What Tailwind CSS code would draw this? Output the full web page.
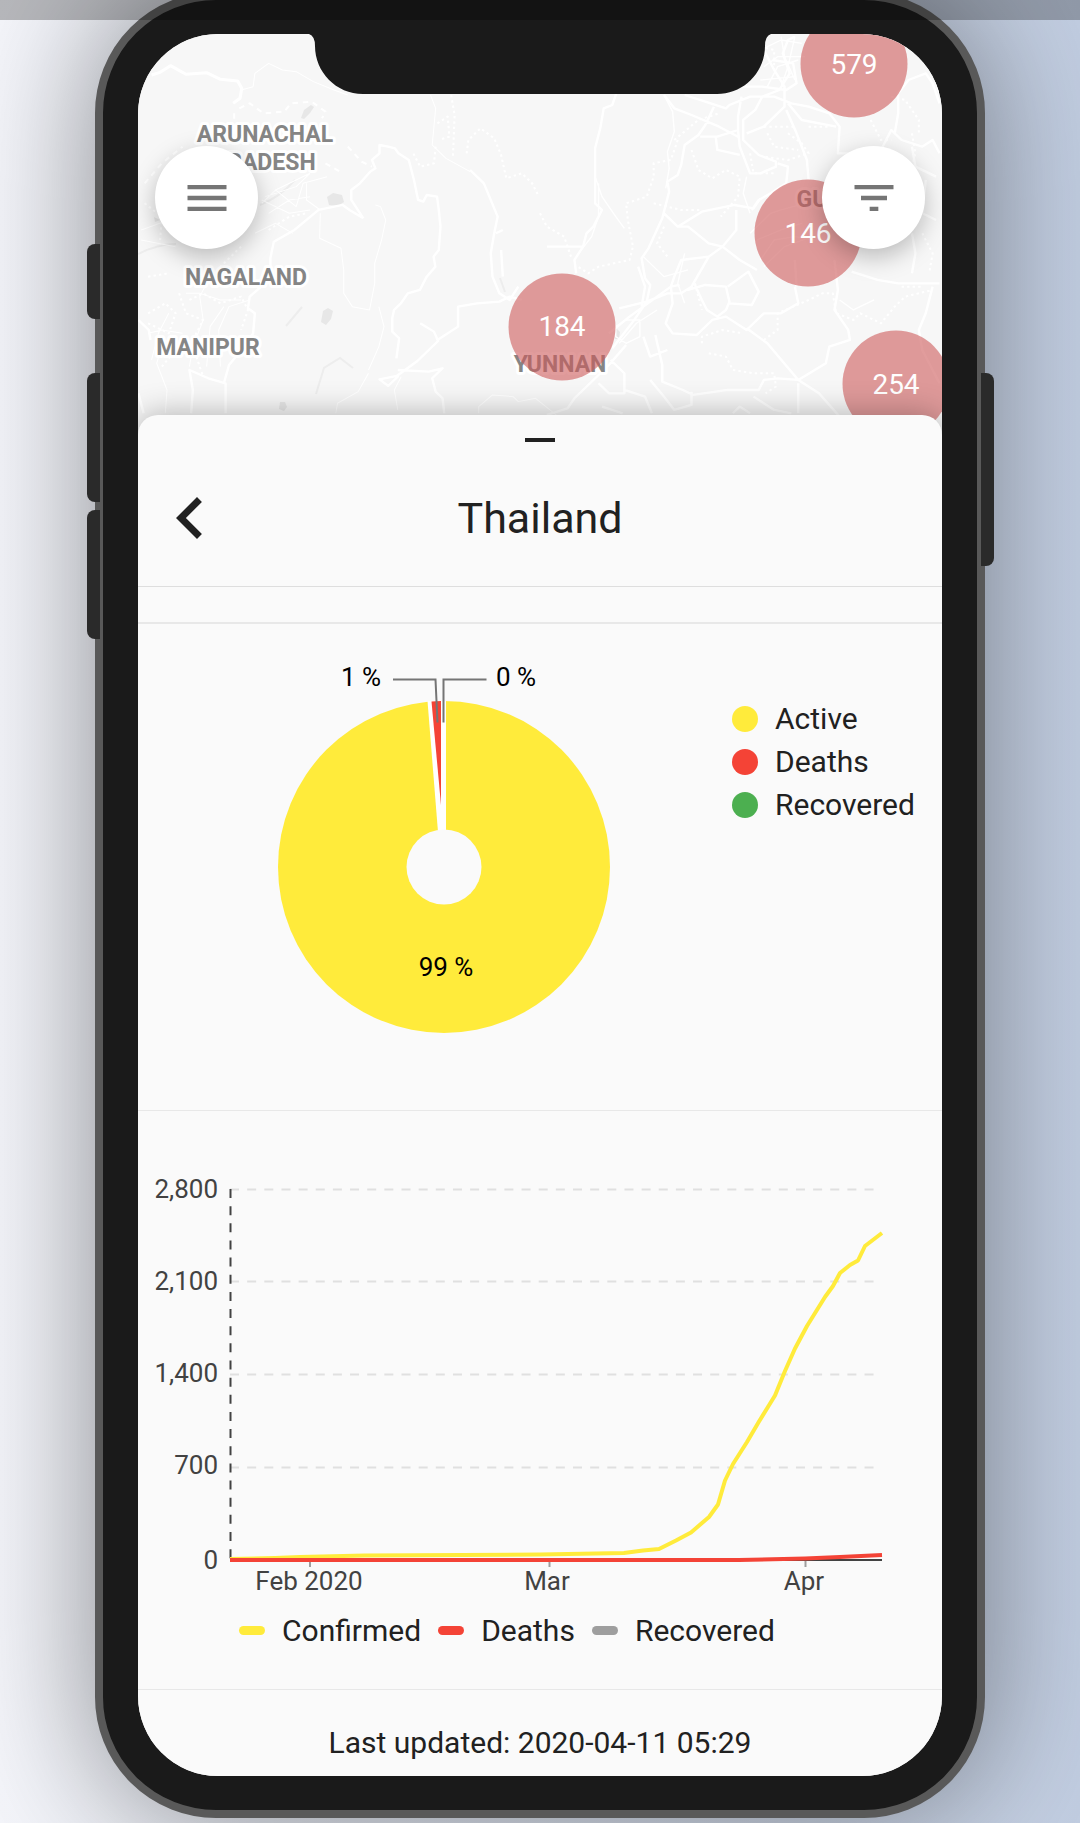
<!DOCTYPE html>
<html lang="en">
<head>
<meta charset="utf-8">
<meta name="viewport" content="width=device-width, initial-scale=1">
<title>Thailand</title>
<script src="https://cdn.jsdelivr.net/npm/@tailwindcss/browser@4"></script>
</head>
<body class="relative min-h-screen overflow-x-hidden bg-gradient-to-r from-[#f4f5fa] to-[#c1cde1] font-['Roboto',sans-serif] text-[#212121]">
<div class="overflow-hidden px-[95px] pb-[5px]">
<main class="relative -mt-2 rounded-[121px] border-8 border-[#595959] bg-[#1a1a1a] px-[35px] py-[34px] shadow-[0_0_130px_rgba(0,0,0,0.42)]">

  <!-- Hardware buttons -->
  <div class="absolute -left-4 top-[244px] h-[75px] w-[13px] rounded-l-lg bg-[#2a2a2a]"></div>
  <div class="absolute -left-4 top-[373px] h-[129px] w-[13px] rounded-l-lg bg-[#2a2a2a]"></div>
  <div class="absolute -left-4 top-[510px] h-[129px] w-[13px] rounded-l-lg bg-[#2a2a2a]"></div>
  <div class="absolute -right-[17px] top-[373px] h-[193px] w-[13px] rounded-r-lg bg-[#2a2a2a]"></div>

  <div class="relative overflow-hidden rounded-[80px] bg-[#f7f7f7]">

    <!-- Map -->
    <section class="relative h-[381px]" aria-label="Map">
      <svg class="absolute inset-x-0 top-0 h-[401px] w-full" viewBox="138 34 804 401" preserveAspectRatio="xMidYMin slice">
        <rect x="0" y="0" width="1080" height="440" fill="#f7f7f7"/>
        <g fill="#e7e7e7">
          <path d="M301 118l3-8 7-5 3 2-4 6-6 6zM327 197l6-4 9 2 2 7-6 4-9-1zM323 311l5-3 5 3-2 8-5 6-5-3zM280 402l5 0 2 5-3 4-5-2zM616 328l4 4-1 7-4 0zM154 217l6 3-5 2z"/>
        </g>
        <g fill="none" stroke="#ededed" stroke-width="2">
          <path d="M286 326l16-19M138 254q20-10 38-10M260 205q20-8 35-25M316 394l8-26 16-10 13 10M500 278l5 14"/>
        </g>
        <g transform="scale(.3444 .3333)" fill="none" stroke="#fff" stroke-linejoin="round">
          <path stroke-width="9" d="M440 225l25-8 30-20 45 26 60-5 40 20 50 5 12 22-5 30-20 15"/>
          <path stroke-width="7" d="M1055 655l-35-55 0-30 25-20 30-35 15-10-10-25 22-20 0-25 25 5 20 5 10 15 30 20 15 60 12 60 15 5 10-20 30 5 5 40 5 50-5 70-15 20 5 30-25 30-20 40-35 10-20 30-20 20-5 25 0 40 20 20-8 60M1055 655l-40-25-20-15-70 15-70 60-60 35-10 50 0 60-60 55-5 35 20 15-5 60-30 45-40 50-15 55M1220 970l40 25 12 28-60 60-60 45-50 10 25 20 30-30M1270 1020l60-40 0-60 55-10 65-5 30-15 35 10M1155 1110l90 5 40-10-30 30 10 40 20 20 5 45M1365 510l40 40 40 100-10 50-10 60 5 70 20 50 30 20 25-40M1455 750l5 80M1440 700l20-10M655 1240l0-90-50-15-55-25 10 60-5 70M402 960l30 30 5 30M402 1180l15 60"/>
          <path stroke-width="3" d="M735 260l5-40 40-30 40 20 40 5 50 30 60 25 40 15M700 270l35-10M930 640l-2 75 62 30 8 65 0 70 25 40 50 10 15-80 0-60 20-70 12-60-15-40-15-5M1250 285l15 40-10 110 40 40 70 40M1165 1130l-20 40 10 60M975 1240l5-30 60-35 30-55M1100 920l15 60-15 60-30 70M1390 1240l0-20 40-35 60 5 15 15 50-10 60 50M410 690l80-30M410 720l100 20M430 1000l40-10 60 10M440 1080l20-80 30-60M480 1240l5-70-30-80 20-70M550 1100l10-60 30-80-10-70 30-60M600 1100l10-120 40-60M640 1100l-5-110 30-70 60-20M700 900l-60 0-60-20-40 0M760 600l80 40 60-10M760 610l40-40 100-50M770 590l90-30 40-40M800 570l60 50 20-70 70-20M890 550l0 50 40 30M780 640l60-40 60-10M740 700l60-30 50 30"/>
          <path stroke-width="6" stroke-dasharray="16 14" d="M695 325l30-15 40 30 60-5 20-25 60-5 40 30-10 20M680 340l0 30M1010 440l40 45 30 15M945 490l50 30M420 550l50-60 60-50"/>
          <path stroke-width="6" stroke-dasharray="7 9" d="M1310 285l10 60-5 130M1270 370l30-20 5 60-30 10M1265 440l-5 50-40 10-20-40M1355 460l5-40 35-35 40 30 20 50 15 70 45-15 30 30 20 40M430 940l50-30 30 30-20 60-60-30M550 900l40-20 50 30 60-20 20 40-20 60M520 880l20 60 50 20-30 60-40 20M470 1100l40-50 60 20 20 60M420 610l50 40-5 70M780 690l60-40 50-10M430 830l60-10M700 740l-60 60"/>
        </g>
        <g transform="translate(540 0) scale(.3444 .3333)" fill="none" stroke="#fff" stroke-linejoin="round">
          <path stroke-width="7" d="M225 270l-15 45-25 10-10 60-15 60 0 140 0 25 20 20-25 50-20 20-10 40-25 0-80 0M125 740l-25 40 5 40M360 285l30 40 50 20 80 35 55 30M420 285l60 20 60 20 10-10 60-25 70 0 50 20 50 10 60 20 30 40-5 80 40 0M505 320l-25 55-20 30-40 30-10 60-10 30-30 20 5 30-20 80-40 90-20 30 10 60 15 20-10 50-40 60-60 80M465 410l50 0 60-20 0-40 10-60M510 410l5 40 65 15M575 390l5 50 30 80 30 0 45-20 0-15-50-20-45-45 0-60 35-30 20-40 50-20 30-50-20-60 15-40 20-10M585 260l60 0 70 10 30-20-10-60-60-10M640 130l40 80 30 50 0 60-60 60-50 20M690 490l30 10-5 50-45 30-35 20-20 30M780 540l-5-60-30-80-30-70M720 310l40 50 100 20M360 640l40 40 30 0 60 50 40 10 50 40 50 30M400 680l70-45 95-20 55 10 20-30M570 630l0 60-40 50-40 30-80 10-20 50-10 30-40 30-80 60-60 50M490 770l-50 90-30 20-40 0-60 25-80 20M285 800l20 60-10 60M430 870l50-15 60 5 10 45-10 25-25 20-30-20-15-30-20-45M550 910l65 5 20-40-30-60-60 45M740 860l10 50-50 30-50 0-50 50-60-40-40 10-45 45-70-5-20-30 20-60-5-50 25-5M740 780l5 80M600 985l60 45 90 110 60 40 60 70M855 780l10 90-10 60 40 60 5 30-60 20-10 50-80 50-60-5-40 5-15 30-90 0-100 15-30-15-60-25 0-50-20-90M300 1010l20 60 50-20M20 1245l60-20 20-30 40-40 60-60 50-60M170 1150l30 30 45 0 0-60-40-40M245 1170l60 20 20 50M320 1140l40 50 30 40 50-15 0-40M620 1190l60 40 50 10M750 1150l0 90M1160 850l-120 0-60-10-75-25M1140 860l-20 80-20 50 10 60 50 100M1030 400l10-60 0-60 30-40 50-20 20 30 20 60M1160 460l-20-40-30 20-60-20-30-30-30 60-80 10M1160 280l-20-70-40-60M1150 530l-60-30-10-60M1120 540l-10 100 40 20M1080 700l10 60-10 60M180 1220l60 20M560 1240l20-20 30 20"/>
          <path stroke-width="4" d="M360 285l25 50 5 60-20 60 5 50-10 60M160 530l20 60 40 60 25 35M170 550l0 100-20 60-30 40M610 700l60-60 30-10 70-20M630 720l70-30 60-20M640 780l40-60 60-10 60 10M650 800l60-60 80-30M640 150l60-30 60 10M650 200l40-30 80 0M660 260l30-60 60-20M640 240l100-10M700 110l10 60 30 70M740 110l-20 90-20 60M610 640l-20-60 10-50M870 900l40 30 60-30M250 960l40 0 0 50-40 20-30-20 0-30zM230 1030l50-60 60-40M420 760l-20 90 20 60M300 770l60 60 70-20"/>
          <path stroke-width="6" stroke-dasharray="7 9" d="M400 420l-20 60-50 10 0 40-20 60-60 20 5 50 15 80-10 40-90 20-30 20-30-20M0 640l20 40 50 30 20 60M440 450l20 60 40 25 40-25 40 20-5 60-50 60M330 610l80 20 60 0M360 680l-20 50 30 40M450 850l20 80M470 1030l0-20 60-20 60 10M490 1060l50 10 20 40 60 10 60 0 5 40-30 20M650 1020l40-30 0-50 90-40 40-20 30 0 10 60 50 20 20-20 60 30 40-50 30-30 80-20M720 400l40 30 20 30-60 20-70-10M660 400l20 40 70 10M780 380l60 0M1020 290l40 10 40 60 0 40M1080 400l10 60-10 40M960 360l30 60 30 0M610 460l10 60 60 0M390 420l70-60 60-20M650 380l90 0M1110 700l30 60-10 60M640 140l40 10 0 60M1050 860l60 0"/>
        </g>
        <g class="text-[23px] font-bold" fill="#858585" stroke="#fff" stroke-width="6" stroke-linejoin="round" paint-order="stroke" text-anchor="middle">
          <text x="265" y="142">ARUNACHAL</text>
          <text x="264" y="170">PRADESH</text>
          <text x="246" y="285">NAGALAND</text>
          <text x="208" y="355">MANIPUR</text>
          <text x="560" y="372">YUNNAN</text>
          <text x="846" y="207">GUIZHOU</text>
        </g>
        <g fill="#cd5a5a" fill-opacity="0.6">
          <circle cx="854" cy="64" r="53.500"/>
          <circle cx="808" cy="233" r="53.500"/>
          <circle cx="562" cy="327" r="53.500"/>
          <circle cx="896" cy="384" r="53.500"/>
        </g>
        <g class="text-[28px]" fill="#fff" text-anchor="middle">
          <text x="854" y="74">579</text>
          <text x="808" y="243">146</text>
          <text x="562" y="336">184</text>
          <text x="896" y="394">254</text>
        </g>
      </svg>

      <svg class="absolute left-1/2 top-0 h-[60px] w-[462px] -translate-x-1/2" viewBox="0 0 462 60" aria-hidden="true">
        <path fill="#1a1a1a" d="M0 0h462q-6 2-6 12C456 38 435 60 408 60H54C27 60 6 38 6 12Q6 2 0 0z"/>
      </svg>

      <button type="button" aria-label="Menu" class="absolute left-[17px] top-[112px] grid size-[103px] place-items-center rounded-full bg-white shadow-[0_8px_24px_rgba(0,0,0,0.25)]">
        <svg class="size-[52px]" viewBox="0 0 24 24" fill="#757575"><path d="M3 18h18v-2H3v2zm0-5h18v-2H3v2zm0-7v2h18V6H3z"/></svg>
      </button>
      <button type="button" aria-label="Filter" class="absolute right-[17px] top-[112px] grid size-[103px] place-items-center rounded-full bg-white shadow-[0_8px_24px_rgba(0,0,0,0.25)]">
        <svg class="size-[52px]" viewBox="0 0 24 24" fill="#757575"><path d="M10 18h4v-2h-4v2zM3 6v2h18V6H3zm3 7h12v-2H6v2z"/></svg>
      </button>
    </section>

    <!-- Country sheet -->
    <section class="relative rounded-t-[20px] bg-[#fafafa] shadow-[0_0_32px_rgba(0,0,0,0.3)]">
      <div class="flex justify-center pt-[23px]"><div class="h-1 w-[30px] bg-[#212121]"></div></div>
      <header class="grid h-[145px] grid-cols-[104px_1fr_104px] items-center border-b border-[#dedede] pt-2">
        <button type="button" aria-label="Back" class="grid place-items-center">
          <svg class="size-[84px]" viewBox="0 0 24 24" fill="#212121"><path d="M15.41 7.41L14 6l-6 6 6 6 1.41-1.41L10.83 12z"/></svg>
        </button>
        <h1 class="text-center text-[43px] leading-[48px]">Thailand</h1>
      </header>
      <div class="h-[37px] border-b-2 border-[#e8e8e8]"></div>

      <div class="flex border-b border-[#e8e8e8]">
        <svg class="min-w-0 flex-1" viewBox="138 624 590 486" role="img" aria-label="Share of cases">
          <circle cx="444" cy="867" r="166" fill="#ffeb3b"/>
          <path d="M427.500 701L438 832H446V701z" fill="#fff"/>
          <path d="M431.500 701.500L441 701V805z" fill="#f44336"/>
          <circle cx="444" cy="867" r="37.500" fill="#fafafa"/>
          <path d="M393 679.500h42.500l2 43M486.500 679.500H443.500v43" fill="none" stroke="#757575" stroke-width="2"/>
          <g class="text-[26px]" fill="#000" text-anchor="middle">
            <text x="361" y="686">1 %</text>
            <text x="516" y="686">0 %</text>
            <text x="446" y="976">99 %</text>
          </g>
        </svg>
        <ul class="w-[214px] shrink-0 pl-1 pt-[73px] text-[30px] leading-[43px]">
          <li class="flex items-center gap-[17px]"><span class="size-[26px] rounded-full bg-[#ffeb3b]"></span>Active</li>
          <li class="flex items-center gap-[17px]"><span class="size-[26px] rounded-full bg-[#f44336]"></span>Deaths</li>
          <li class="flex items-center gap-[17px]"><span class="size-[26px] rounded-full bg-[#4caf50]"></span>Recovered</li>
        </ul>
      </div>

      <div class="border-b border-[#e8e8e8] pb-[37px]">
        <svg class="block w-full" viewBox="138 1111 804 498" role="img" aria-label="Cases over time">
          <path d="M230 1189.500H874M230 1281.500H874M230 1374.500H874M230 1467.500H874" stroke="#e0e0e0" stroke-width="2" stroke-dasharray="9 8.150" fill="none"/>
          <path d="M230.500 1189V1560" stroke="#424242" stroke-width="2" stroke-dasharray="9 8.150"/>
          <path d="M310 1560v7M549.500 1560v7M805.500 1560v7" stroke="#9e9e9e" stroke-width="2"/>
          <path d="M230 1560H882" stroke="#424242" stroke-width="2"/>
          <g fill="none" stroke-width="4" stroke-linejoin="round">
            <path stroke="#ffeb3b" d="M230 1559L275 1558 300 1557 365 1555.500 540 1554.500 624 1553 643 1550.500 659 1549 676 1540.500 691 1532.500 702 1523 709 1517 718 1504.500 725 1480.500 733 1464 747 1442 759 1421.500 767 1408.500 775 1395.500 785 1371 795 1348.500 807 1326 825 1297 833 1286 840 1273 850 1265 858 1260.500 865 1246 882 1233"/>
            <path stroke="#f44336" d="M230 1560H739L805 1558.500 840 1557 882 1555"/>
          </g>
          <g class="text-[26px]" fill="#424242" text-anchor="end">
            <text x="218" y="1198">2,800</text>
            <text x="218" y="1290">2,100</text>
            <text x="218" y="1382">1,400</text>
            <text x="218" y="1474">700</text>
            <text x="218" y="1569">0</text>
          </g>
          <g class="text-[26px]" fill="#424242" text-anchor="middle">
            <text x="309" y="1590">Feb 2020</text>
            <text x="547" y="1590">Mar</text>
            <text x="804" y="1590">Apr</text>
          </g>
        </svg>
        <ul class="flex gap-[17px] pl-[101px] text-[30px] leading-[43px]">
          <li class="flex items-center gap-[17px]"><span class="h-[9px] w-[26px] rounded-full bg-[#ffeb3b]"></span>Confirmed</li>
          <li class="flex items-center gap-[17px]"><span class="h-[9px] w-[26px] rounded-full bg-[#f44336]"></span>Deaths</li>
          <li class="flex items-center gap-[17px]"><span class="h-[9px] w-[26px] rounded-full bg-[#9e9e9e]"></span>Recovered</li>
        </ul>
      </div>

      <footer class="pb-4 pt-[35px] text-center text-[30px] leading-[35px]">Last updated: 2020-04-11 05:29</footer>
    </section>
  </div>
</main>
</div>
<div class="absolute inset-x-0 top-0 h-5 bg-black/25"></div>
</body>
</html>
